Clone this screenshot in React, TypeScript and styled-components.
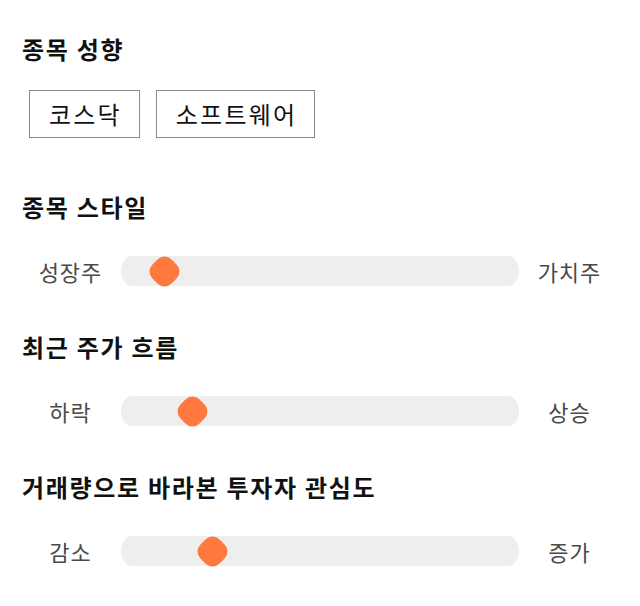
import styled, { createGlobalStyle } from 'styled-components'

const GlobalStyle = createGlobalStyle`
  * { box-sizing: border-box; }
  body {
    margin: 0;
    background: #fff;
    font-family: "Noto Sans CJK KR", "Noto Sans", sans-serif;
  }
`

const Page = styled.div`
  width: 640px;
  padding: 32px 20px 0 20px;
  display: flex;
  flex-direction: column;
`

const Section = styled.section<{ $gap: number }>`
  display: flex;
  flex-direction: column;
  margin-bottom: ${(p) => p.$gap}px;
`

const Heading = styled.h2<{ $space: number }>`
  margin: 0 0 ${(p) => p.$space}px 2px;
  font-size: 24px;
  letter-spacing: 1.7px;
  line-height: 34px;
  font-weight: 700;
  color: #111;
`

const Tags = styled.div`
  display: flex;
  gap: 16px;
  padding-left: 9px;
`

const Tag = styled.button`
  font-family: inherit;
  font-size: 24px;
  letter-spacing: 2.2px;
  line-height: 38px;
  padding: 4px 17px 4px 19px;
  border: 1px solid #8a8a8a;
  background: #fff;
  color: #111;
  cursor: pointer;
`

const SliderRow = styled.div`
  display: grid;
  grid-template-columns: 101px 1fr 101px;
  align-items: center;
  height: 30px;
`

const Label = styled.span`
  text-align: center;
  font-size: 22px;
  letter-spacing: 1px;
  color: #4a4a4a;
`

const Track = styled.div`
  position: relative;
  height: 30px;
  background: #eeeeee;
  border-radius: 11px / 15px;
`

const Thumb = styled.div`
  position: absolute;
  top: 1.5px;
  width: 27px;
  height: 27px;
  margin-left: -13.5px;
  background: #ff783d;
  border-radius: 10px;
  transform: rotate(45deg);
`

const sliders = [
  { title: '종목 스타일', left: '성장주', right: '가치주', pos: 43 },
  { title: '최근 주가 흐름', left: '하락', right: '상승', pos: 71 },
  { title: '거래량으로 바라본 투자자 관심도', left: '감소', right: '증가', pos: 91 },
]

const App = () => {
  return (
    <>
      <GlobalStyle />
      <Page>
        <Section $gap={52}>
          <Heading $space={24}>종목 성향</Heading>
          <Tags>
            <Tag>코스닥</Tag>
            <Tag>소프트웨어</Tag>
          </Tags>
        </Section>
        {sliders.map((s) => (
          <Section key={s.title} $gap={45}>
            <Heading $space={31}>{s.title}</Heading>
            <SliderRow>
              <Label>{s.left}</Label>
              <Track>
                <Thumb style={{ left: s.pos }} />
              </Track>
              <Label>{s.right}</Label>
            </SliderRow>
          </Section>
        ))}
      </Page>
    </>
  )
}

export default App
